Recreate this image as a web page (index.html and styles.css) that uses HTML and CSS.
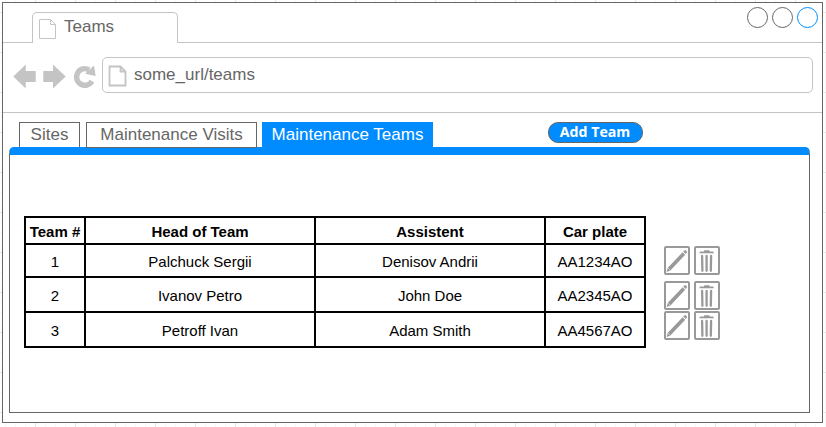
FILE: index.html
```html
<!DOCTYPE html>
<html lang="en">
<head>
<meta charset="utf-8">
<title>Teams</title>
<link rel="stylesheet" href="styles.css">
</head>
<body>
<svg width="0" height="0" class="defs" aria-hidden="true">
  <symbol id="page" viewBox="0 0 17 20"><path d="M.5 .5H11.5L16.5 5.5V19.5H.5ZM11.5 .5V5.5H16.5"/></symbol>
  <symbol id="pencil" viewBox="0 0 26 29">
    <rect x="1" y="1" width="24" height="27" rx="1" fill="#fff" stroke="#999" stroke-width="2"/>
    <path d="M2.6 26L3.8 21.8L18.6 6.2L21.2 8.8L6.4 24.4ZM19.2 5.6L20.3 4.4Q21.1 3.7 22 4.6L22.6 5.3Q23.4 6.2 22.6 7L21.8 8.1Z" fill="#999"/>
    <path d="M4 22L6 24" stroke="#fff" stroke-width=".5"/>
  </symbol>
  <symbol id="trash" viewBox="0 0 26 29">
    <rect x="1" y="1" width="24" height="27" rx="1" fill="#fff" stroke="#999" stroke-width="2"/>
    <path d="M5.5 7.3V6.4Q5.5 5.5 6.5 5.5H10V5Q10 4.2 10.8 4.2H14.8Q15.6 4.2 15.6 5V5.5H18.7Q19.7 5.5 19.7 6.4V7.3Z" fill="#999"/>
    <path d="M8.1 10L8.4 24.8M12.6 10V24.8M17.1 10L16.8 24.8" fill="none" stroke="#999" stroke-width="2.3" stroke-linecap="round"/>
  </symbol>
</svg>
<div class="window">
  <header class="titlebar">
    <div class="browser-tab"><svg class="page-icon thin"><use href="#page"/></svg><span>Teams</span></div>
    <div class="controls"><i></i><i></i><i class="blue"></i></div>
  </header>
  <div class="toolbar">
    <svg class="nav" width="84" height="26" viewBox="0 0 84 26" fill="#c4c4c4">
      <path d="M.3 12.5L12.7 .5V7H22.7V18H12.7V24.5Z"/>
      <path d="M52.7 12.5L40 .5V7H30.3V18H40V24.5Z"/>
      <path d="M79 17.2A8.3 8.3 0 1 1 76 5.8" fill="none" stroke="#c4c4c4" stroke-width="5.4"/>
      <path d="M81 1.5L82.7 12L72 9.8Z"/>
    </svg>
    <div class="address"><svg class="page-icon thick"><use href="#page"/></svg><span>some_url/teams</span></div>
  </div>
  <main>
    <nav class="tabs">
      <a class="tab sites">Sites</a>
      <a class="tab visits">Maintenance Visits</a>
      <a class="tab active">Maintenance Teams</a>
      <button class="add">Add Team</button>
    </nav>
    <section class="panel">
      <table>
        <colgroup><col class="c1"><col class="c2"><col class="c2"><col class="c3"></colgroup>
        <tr class="head"><th>Team #</th><th>Head of Team</th><th>Assistent</th><th>Car plate</th></tr>
        <tr class="first"><td>1</td><td>Palchuck Sergii</td><td>Denisov Andrii</td><td>AA1234AO</td></tr>
        <tr><td>2</td><td>Ivanov Petro</td><td>John Doe</td><td>AA2345AO</td></tr>
        <tr><td>3</td><td>Petroff Ivan</td><td>Adam Smith</td><td>AA4567AO</td></tr>
      </table>
      <div class="actions">
        <div class="pair first-pair"><svg><use href="#pencil"/></svg><svg><use href="#trash"/></svg></div>
        <div class="pair"><svg><use href="#pencil"/></svg><svg><use href="#trash"/></svg></div>
        <div class="pair"><svg><use href="#pencil"/></svg><svg><use href="#trash"/></svg></div>
      </div>
    </section>
  </main>
</div>
</body>
</html>
```
FILE: styles.css
```css
* { box-sizing: border-box; }
body {
  margin: 0;
  padding: 2px;
  height: 427px;
  overflow: hidden;
  font-family: "Liberation Sans", Arial, sans-serif;
  color: #666;
  background-color: #fff;
  background-image:
    linear-gradient(90deg, #e4e4e4 1px, transparent 1px),
    linear-gradient(#e4e4e4 1px, transparent 1px),
    linear-gradient(90deg, #f7f7f7 1px, transparent 1px),
    linear-gradient(#f7f7f7 1px, transparent 1px);
  background-size: 40px 40px, 40px 40px, 10px 10px, 10px 10px;
  background-position: 35px 12px, 35px 12px, 5px 2px, 5px 2px;
}
.defs { display: none; }
svg { display: block; flex: none; }
symbol { overflow: visible; }
.window { width: 821px; height: 421px; border: 1px solid #666; background: #fff; }
.titlebar {
  height: 40px;
  border-bottom: 1px solid #c4c4c4;
  display: flex;
  justify-content: space-between;
  padding-left: 29px;
}
.browser-tab {
  display: flex;
  width: 146px;
  height: 31px;
  margin-top: 9px;
  padding: 5px 0 0 6px;
  border: 1px solid #c4c4c4;
  border-bottom: 0;
  border-radius: 5px 5px 0 0;
  background: #fff;
  font-size: 17px;
  line-height: 17px;
}
.browser-tab span { margin-left: 8px; }
.page-icon { width: 17px; height: 20px; fill: none; stroke: #c4c4c4; overflow: visible; }
.thin { stroke-width: 1; margin-top: 1px; }
.controls { display: flex; gap: 4px; padding: 4px 4px 0 0; }
.controls i { width: 21px; height: 21px; border: 1px solid #666; border-radius: 50%; }
.controls .blue { border-color: #008cff; }
.toolbar {
  display: flex;
  height: 70px;
  padding: 14px 9px 0 10px;
  border-bottom: 1px solid #c4c4c4;
}
.nav { margin-top: 7px; }
.address {
  display: flex;
  flex: 1;
  height: 36px;
  margin-left: 5px;
  padding: 8px 0 0 6px;
  border: 1px solid #c4c4c4;
  border-radius: 5px;
  font-size: 17px;
  line-height: 17px;
}
.thick { stroke-width: 1.8; }
.address span { margin-left: 8px; }
main { padding: 9px 12px 0 6px; }
.tabs { display: flex; height: 25px; padding-left: 10px; }
.tab { border: 1px solid #666; font-size: 17px; line-height: 23px; text-align: center; }
.sites { width: 61px; border-bottom: 0; }
.visits { position: relative; width: 171px; height: 26px; margin-left: 6px; }
.active { width: 171px; margin-left: 5px; border-color: #008cff; background: #008cff; color: #fff; }
.add {
  width: 95px;
  height: 21px;
  margin-left: 115px;
  padding: 0 1px 2px 0;
  border: 1px solid #666;
  border-radius: 10px;
  background: #008cff;
  color: #fff;
  font: bold 14.2px/17px "Open Sans", sans-serif;
}
.panel {
  display: flex;
  align-items: flex-start;
  height: 266px;
  padding: 61px 0 0 14px;
  border: 1px solid #666;
  border-top: 8px solid #008cff;
  border-radius: 5px 5px 0 0;
}
table { width: 622px; flex: none; table-layout: fixed; border-collapse: collapse; color: #000; font-size: 15px; line-height: 17px; }
.c1 { width: 60px; }
.c2 { width: 230px; }
.c3 { width: 100px; }
th, td { border: 2px solid #000; padding: 1px 0 0; text-align: center; white-space: nowrap; }
tr { height: 35px; }
.head { height: 27px; }
.head th { padding-top: 2px; }
.first { height: 33px; }
.actions { margin: 30px 0 0 18px; }
.pair { display: flex; gap: 4px; margin-bottom: 1px; }
.first-pair { margin-bottom: 6px; }
.pair svg { width: 26px; height: 29px; }
```
